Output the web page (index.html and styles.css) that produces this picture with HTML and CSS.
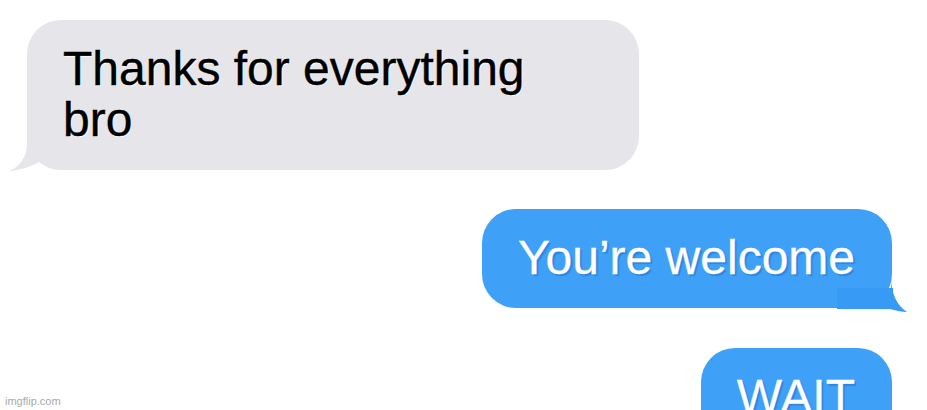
FILE: index.html
```html
<!DOCTYPE html>
<html>
<head>
    <title>Messages</title>
    <link rel="stylesheet" href="styles.css">
</head>
<body>
    <div class="thread">
        <div class="msg msg-in">
            <svg class="tail tail-in" width="70" height="40" viewBox="0 0 70 40">
                <path d="M17 0 L17 10 C17 24 11 32 0 38 C12 37 24 32 33 27 C42 33 55 35 70 35 L70 0 Z" fill="#e5e5ea"/>
            </svg>
            <span class="line">Thanks for everything</span>
            <span class="line">bro</span>
        </div>
        <div class="msg msg-out">
            <svg class="tail tail-out" width="75" height="35" viewBox="0 0 75 35">
                <rect x="2" y="8" width="56" height="21" fill="#379bf6"/>
                <path d="M56 0 C57 16 63 26 72 32 C62 32 46 27 35 20 C28 25 15 29 2 29 L2 8 L56 8 Z" fill="#379bf6"/>
            </svg>
            <span class="line">You’re welcome</span>
        </div>
        <div class="msg msg-out">
            <span class="line">WAIT</span>
        </div>
    </div>
    <div class="watermark">imgflip.com</div>
</body>
</html>
```

FILE: styles.css
```css
html, body {
    margin: 0;
    padding: 0;
    height: 100%;
    overflow: hidden;
    background: #fff;
}
body {
    font-family: "Liberation Sans", Arial, sans-serif;
    position: relative;
}
.thread {
    display: flex;
    flex-direction: column;
    gap: 39px;
    padding: 20px 35px 0 27px;
}
.msg {
    position: relative;
    font-size: 48px;
    line-height: 51px;
    padding: 23px 37px 25px 36px;
    border-radius: 34px;
    box-sizing: border-box;
}
.line {
    position: relative;
    display: block;
    white-space: nowrap;
}
.msg-in {
    align-self: flex-start;
    width: 612px;
    background-color: #e5e5ea;
    color: #000;
    -webkit-text-stroke: 0.4px #000;
    text-shadow: 1px 1px 1px #fff;
}
.msg-out {
    align-self: flex-end;
    background-color: #3fa0f8;
    color: #fff;
    -webkit-text-stroke: 0.3px #fff;
    text-shadow: 2px 2px 1px #2d86dc;
}
.msg-out + .msg-out {
    margin-top: 1px;
}
.tail {
    position: absolute;
}
.tail-in {
    left: -17px;
    bottom: -3px;
}
.tail-out {
    right: -18px;
    bottom: -7px;
}
.watermark {
    position: absolute;
    left: 5px;
    bottom: 3px;
    font-size: 11px;
    color: #a8a8a8;
}
```
